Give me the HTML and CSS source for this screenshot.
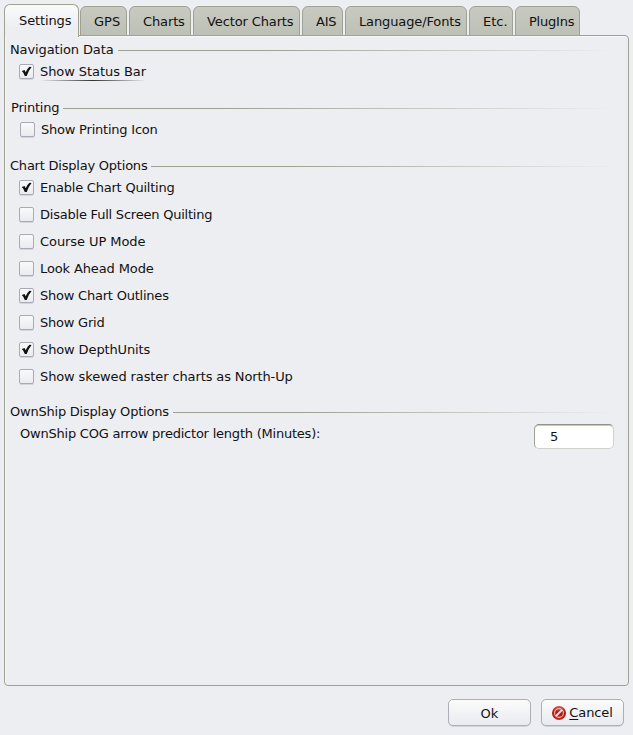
FILE: index.html
```html
<!DOCTYPE html>
<html lang="en">
<head>
<meta charset="utf-8">
<title>Options</title>
<link rel="stylesheet" href="styles.css">
</head>
<body>
<div class="dialog">
  <nav class="tabs">
    <div class="tab active"><span class="snug">Settings</span></div>
    <div class="tab gps"><span>GPS</span></div>
    <div class="tab charts"><span class="snug">Charts</span></div>
    <div class="tab vector"><span class="snug">Vector Charts</span></div>
    <div class="tab ais"><span class="tight">AIS</span></div>
    <div class="tab lang"><span class="snug">Language/Fonts</span></div>
    <div class="tab etc"><span>Etc.</span></div>
    <div class="tab plugins"><span class="tight">PlugIns</span></div>
  </nav>
  <main class="panel">
    <section>
      <h2><span class="snug">Navigation Data</span></h2>
      <label class="row"><i class="box"><svg viewBox="0 0 13 13"><path d="M1.8 6L4.6 5L5.7 7.2Q7.4 3.6 9.4 1.8L11.6 2Q8.3 5.8 6.7 11L4.8 11Q3.9 7.9 1.8 6Z"/></svg></i><span class="focused slight">Show Status Bar</span></label>
    </section>
    <section>
      <h2 class="printing"><span class="tight">Printing</span></h2>
      <label class="row shifted"><i class="box"></i><span class="tight">Show Printing Icon</span></label>
    </section>
    <section>
      <h2><span class="tight">Chart Display Options</span></h2>
      <label class="row"><i class="box"><svg viewBox="0 0 13 13"><path d="M1.8 6L4.6 5L5.7 7.2Q7.4 3.6 9.4 1.8L11.6 2Q8.3 5.8 6.7 11L4.8 11Q3.9 7.9 1.8 6Z"/></svg></i><span class="tight">Enable Chart Quilting</span></label>
      <label class="row"><i class="box"></i><span class="tight">Disable Full Screen Quilting</span></label>
      <label class="row"><i class="box"></i><span class="slight">Course UP Mode</span></label>
      <label class="row"><i class="box"></i><span class="snug">Look Ahead Mode</span></label>
      <label class="row"><i class="box"><svg viewBox="0 0 13 13"><path d="M1.8 6L4.6 5L5.7 7.2Q7.4 3.6 9.4 1.8L11.6 2Q8.3 5.8 6.7 11L4.8 11Q3.9 7.9 1.8 6Z"/></svg></i><span class="tight">Show Chart Outlines</span></label>
      <label class="row"><i class="box"></i><span class="tight">Show Grid</span></label>
      <label class="row"><i class="box"><svg viewBox="0 0 13 13"><path d="M1.8 6L4.6 5L5.7 7.2Q7.4 3.6 9.4 1.8L11.6 2Q8.3 5.8 6.7 11L4.8 11Q3.9 7.9 1.8 6Z"/></svg></i><span class="snug">Show DepthUnits</span></label>
      <label class="row"><i class="box"></i><span class="snug">Show skewed raster charts as North-Up</span></label>
    </section>
    <section>
      <h2><span class="tight">OwnShip Display Options</span></h2>
      <div class="field"><span class="tight">OwnShip COG arrow predictor length (Minutes):</span><div class="input">5</div></div>
    </section>
  </main>
  <footer class="actions">
    <button class="ok">Ok</button>
    <button class="cancel"><svg viewBox="0 0 14 14"><defs><linearGradient id="red" x2="0" y2="1"><stop stop-color="#d9544c"/><stop offset=".5" stop-color="#a91610"/><stop offset="1" stop-color="#cc261d"/></linearGradient></defs><circle cx="7" cy="7" r="7" fill="url(#red)"/><circle cx="7" cy="7" r="4.4" fill="none" stroke="#e5bdb9" stroke-width="1.1"/><path d="M3.9 10.1L10.1 3.9" stroke="#f2e2e0" stroke-width="1.9"/></svg><span class="snug"><u>C</u>ancel</span></button>
  </footer>
</div>
</body>
</html>
```
FILE: styles.css
```css
* { box-sizing: border-box; }
body {
  margin: 0;
  background: #edeef2;
  color: #111;
  font: 13px/18px "DejaVu Sans", sans-serif;
}
.slight { letter-spacing: -0.07px; }
.snug { letter-spacing: -0.12px; }
.tight { letter-spacing: -0.22px; }
.dialog {
  width: 633px;
  height: 735px;
  padding: 4px 4px 0;
  display: flex;
  flex-direction: column;
}
.tabs {
  display: flex;
  align-items: flex-end;
  height: 32px;
  gap: 2px;
  margin-bottom: -1px;
  z-index: 1;
}
.tab {
  height: 30px;
  padding: 6px 0 0 13px;
  border: 1px solid #9fa192;
  border-radius: 6px 6px 0 0;
  background: linear-gradient(#c8cac1, #bdc0b5);
  white-space: nowrap;
}
.tab.active {
  width: 75px;
  height: 33px;
  margin: 0 -1px -1px 0;
  padding-top: 7px;
  padding-left: 14px;
  border-bottom: 0;
  background: linear-gradient(#fafafb, #edeef2 70%);
}
.gps { width: 47px; }
.charts { width: 62px; }
.vector { width: 107px; }
.ais { width: 41px; }
.lang { width: 122px; }
.etc { width: 44px; }
.plugins { width: 65px; }
.panel {
  width: 625px;
  height: 651px;
  padding: 4px 14px 0 5px;
  border: 1px solid #9fa192;
  border-radius: 0 4px 4px 4px;
  box-shadow: inset 1px 1px #f8f8fa;
  display: flex;
  flex-direction: column;
  gap: 13px;
}
.panel section:last-child { margin-top: -1px; }
h2 {
  display: flex;
  align-items: center;
  gap: 4px;
  height: 18px;
  margin: 0;
  font: inherit;
}
h2 span { padding-top: 2px; }
h2::after {
  content: "";
  flex: 1;
  height: 1px;
  margin-top: 2px;
  background: linear-gradient(90deg, #9fa192 30%, #edeef2);
}
.row {
  display: flex;
  align-items: center;
  gap: 6px;
  height: 27px;
  padding-left: 9px;
}
.shifted { padding-left: 10px; }
.printing { padding-left: 1px; }
.box {
  width: 15px;
  height: 15px;
  border: 1px solid #a9aab6;
  border-radius: 2px;
  background: linear-gradient(#f9f9fa, #eaebef);
  box-shadow: 0 1px #d4d5dc;
}
.box svg { display: block; width: 13px; height: 13px; }
.box path { fill: #111; }
.focused { position: relative; }
.focused::after {
  content: "";
  position: absolute;
  left: 0;
  right: 0;
  bottom: 0;
  height: 1px;
  background: linear-gradient(90deg, transparent, #333 50%, transparent);
}
.field {
  display: flex;
  justify-content: space-between;
  padding: 4px 0 0 10px;
}
.field > span { padding-top: 1px; }
.input {
  width: 80px;
  height: 25px;
  padding: 3px 0 0 15px;
  border: 1px solid;
  border-color: #8f9285 #cfd2cc #cfd2cc #9fa192;
  border-radius: 5px;
  background: #fff;
  box-shadow: inset 0 1px #c9cbc3;
}
.actions {
  display: flex;
  justify-content: flex-end;
  gap: 10px;
  margin: 13px 5px 0 0;
}
button {
  display: flex;
  align-items: center;
  justify-content: center;
  gap: 3px;
  width: 83px;
  height: 27px;
  padding: 0;
  border: 1px solid #acaeba;
  border-radius: 5px;
  background: linear-gradient(#fbfbfc, #eaebef);
  box-shadow: 0 1px #d4d5dc;
  color: #111;
  font: inherit;
}
.ok { padding-top: 2px; }
button svg { width: 14px; height: 14px; }
u { text-underline-offset: 2px; }
```
